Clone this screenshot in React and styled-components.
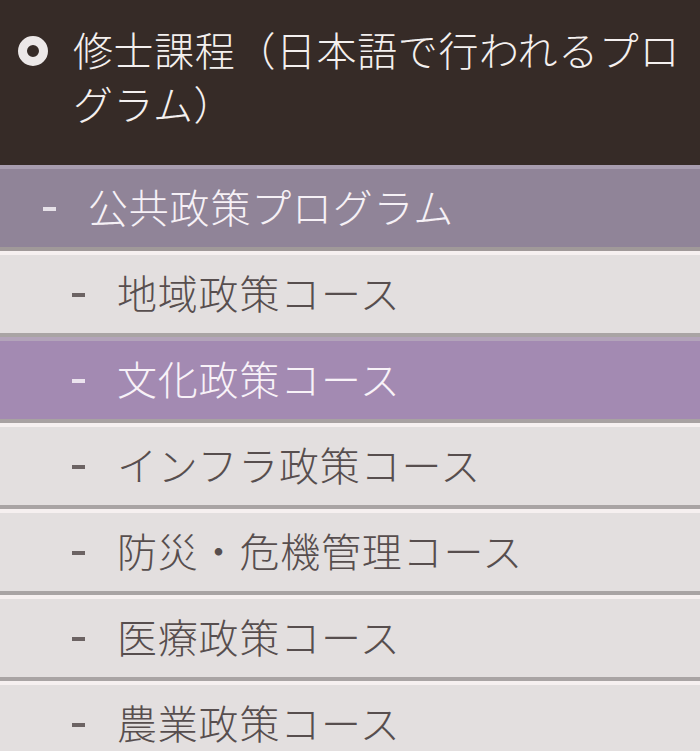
import React from "react";
import styled, { createGlobalStyle } from "styled-components";

const Global = createGlobalStyle`
  html, body { margin: 0; padding: 0; background: #e3dfdf; }
  body {
    font-family: "Noto Sans CJK JP", "Noto Sans", sans-serif;
    -webkit-font-smoothing: antialiased;
  }
  ul { list-style: none; margin: 0; padding: 0; }
`;

const Menu = styled.nav`
  width: 700px;
  height: 751px;
  overflow: hidden;
  background: #e3dfdf;
`;

const Header = styled.div`
  display: flex;
  align-items: flex-start;
  gap: 25px;
  height: 165px;
  box-sizing: border-box;
  padding: 22px 0 0 18px;
  background: #362b27;
  color: #f4f0ef;
`;

const Ring = styled.span`
  flex: 0 0 auto;
  width: 30px;
  height: 30px;
  margin-top: 14px;
  box-sizing: border-box;
  border-radius: 50%;
  border: 9px solid #ece8e8;
  background: #362b27;
`;

const HeaderTitle = styled.h2`
  margin: 0;
  width: 627px;
  font-size: 40px;
  line-height: 54px;
  font-weight: 300;
  letter-spacing: 0.6px;
`;

const Row = styled.li`
  display: flex;
  align-items: center;
  height: 86px;
  box-sizing: border-box;
  padding-left: ${(p) => p.$indent}px;
  padding-bottom: 4px;
  border-top: 4px solid ${(p) => p.$hi};
  border-bottom: 4px solid ${(p) => p.$lo};
  background: ${(p) => p.$bg};
  color: ${(p) => p.$fg};
  font-size: 40px;
  line-height: 1;
  white-space: nowrap;
`;

const Dash = styled.span`
  display: inline-block;
  flex: 0 0 auto;
  width: 13px;
  height: 4px;
  margin-right: ${(p) => p.$gap}px;
  margin-top: 6px;
  background: currentColor;
  opacity: 0.85;
`;

const Label = styled.span`
  font-weight: 300;
  letter-spacing: 0.8px;
`;

const themes = {
  program: { bg: "#908498", fg: "#f6f1f6", hi: "#a79caf", lo: "#a09999" },
  active: { bg: "#a38ab2", fg: "#f8f2f8", hi: "#b3a4ba", lo: "#a8a2a2" },
  normal: { bg: "#e3dfdf", fg: "#574e4e", hi: "#f6f0f0", lo: "#a9a4a4" },
};

const items = [
  { label: "公共政策プログラム", kind: "program", indent: 43, gap: 32 },
  { label: "地域政策コース", kind: "normal", indent: 72, gap: 32 },
  { label: "文化政策コース", kind: "active", indent: 72, gap: 32 },
  { label: "インフラ政策コース", kind: "normal", indent: 72, gap: 32 },
  { label: "防災・危機管理コース", kind: "normal", indent: 72, gap: 32 },
  { label: "医療政策コース", kind: "normal", indent: 72, gap: 32 },
  { label: "農業政策コース", kind: "normal", indent: 72, gap: 32 },
];

export default function App() {
  return (
    <>
      <Global />
      <Menu>
        <Header>
          <Ring />
          <HeaderTitle>修士課程（日本語で行われるプログラム）</HeaderTitle>
        </Header>
        <ul>
          {items.map((it) => {
            const t = themes[it.kind];
            return (
              <Row
                key={it.label}
                $indent={it.indent}
                $bg={t.bg}
                $fg={t.fg}
                $hi={t.hi}
                $lo={t.lo}
              >
                <Dash $gap={it.gap} />
                <Label>{it.label}</Label>
              </Row>
            );
          })}
        </ul>
      </Menu>
    </>
  );
}
